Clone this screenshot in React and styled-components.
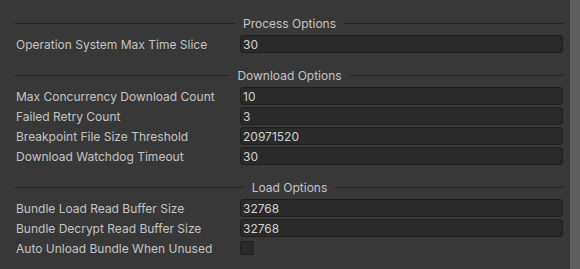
import React from 'react';
import styled, { createGlobalStyle } from 'styled-components';

const GlobalStyle = createGlobalStyle`
  html, body {
    margin: 0;
    padding: 0;
    background: #383838;
  }
  * {
    box-sizing: border-box;
  }
`;

const Page = styled.div`
  display: flex;
  height: 100vh;
  background: #383838;
  font-family: Inter, "Noto Sans", sans-serif;
  font-size: 12px;
  color: #c4c4c4;
  overflow: hidden;
`;

const Inspector = styled.div`
  flex: 1;
  padding: 12px 6px 0 15px;
  display: flex;
  flex-direction: column;
`;

const ScrollStrip = styled.div`
  width: 10px;
  background: #5e5e5e;
`;

const Section = styled.section`
  display: flex;
  flex-direction: column;
  & + & {
    margin-top: 10px;
  }
`;

const Header = styled.div`
  display: flex;
  align-items: center;
  gap: 8px;
  height: 22px;
  &::before,
  &::after {
    content: '';
    flex: 1;
    height: 1px;
    background: #242424;
  }
`;

const HeaderText = styled.span`
  white-space: nowrap;
`;

const Row = styled.div`
  display: grid;
  grid-template-columns: 225px 1fr;
  align-items: center;
  height: 20px;
`;

const Label = styled.span`
  padding-left: 1px;
  white-space: nowrap;
`;

const Field = styled.div`
  height: 18px;
  margin-right: 1px;
  background: #2a2a2a;
  border: 1px solid #1f1f1f;
  border-radius: 3px;
  padding: 0 2px;
  display: flex;
  align-items: center;
  color: #d2d2d2;
`;

const Check = styled.div`
  width: 14px;
  height: 14px;
  background: #2a2a2a;
  border: 1px solid #1f1f1f;
  border-radius: 2px;
`;

const sections = [
  {
    title: 'Process Options',
    rows: [{ label: 'Operation System Max Time Slice', value: '30' }],
  },
  {
    title: 'Download Options',
    rows: [
      { label: 'Max Concurrency Download Count', value: '10' },
      { label: 'Failed Retry Count', value: '3' },
      { label: 'Breakpoint File Size Threshold', value: '20971520' },
      { label: 'Download Watchdog Timeout', value: '30' },
    ],
  },
  {
    title: 'Load Options',
    rows: [
      { label: 'Bundle Load Read Buffer Size', value: '32768' },
      { label: 'Bundle Decrypt Read Buffer Size', value: '32768' },
      { label: 'Auto Unload Bundle When Unused', check: true },
    ],
  },
];

const App = () => {
  return (
    <>
      <GlobalStyle />
      <Page>
        <Inspector>
          {sections.map((s) => (
            <Section key={s.title}>
              <Header>
                <HeaderText>{s.title}</HeaderText>
              </Header>
              {s.rows.map((r) => (
                <Row key={r.label}>
                  <Label>{r.label}</Label>
                  {r.check ? <Check /> : <Field>{r.value}</Field>}
                </Row>
              ))}
            </Section>
          ))}
        </Inspector>
        <ScrollStrip />
      </Page>
    </>
  );
};

export default App;
